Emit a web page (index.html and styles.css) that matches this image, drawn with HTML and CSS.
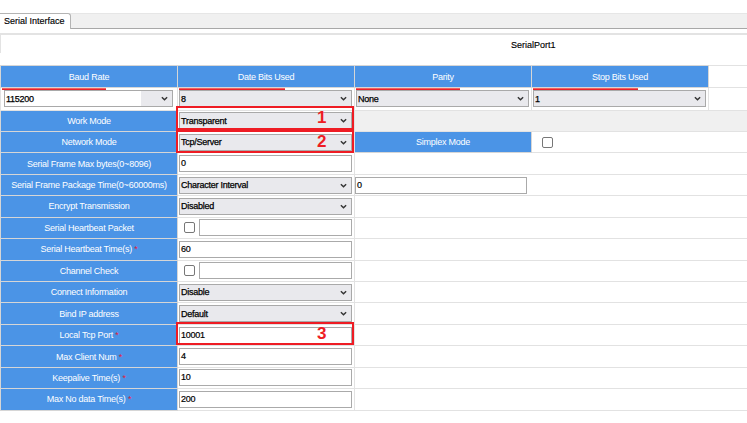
FILE: index.html
```html
<!DOCTYPE html>
<html>
<head>
<meta charset="utf-8">
<link rel="stylesheet" href="styles.css">
</head>
<body>
<div class="page">
  <div class="tabbar">
    <div class="tab">Serial Interface</div>
    <div class="tabrest"></div>
  </div>
  <div class="portbar"><span class="portname">SerialPort1</span></div>

  <table class="grid">
    <colgroup>
      <col class="c1"><col class="c2"><col class="c3"><col class="c4"><col class="c5">
    </colgroup>
    <tr class="head">
      <th>Baud Rate</th>
      <th>Date Bits Used</th>
      <th>Parity</th>
      <th>Stop Bits Used</th>
      <td class="blank"></td>
    </tr>
    <tr class="selrow">
      <td><div class="wrap"><div class="sel combo"><span class="txt">115200</span><span class="drop"><svg class="chev" viewBox="0 0 8 5"><path d="M1 1 L4 4 L7 1"/></svg></span></div><span class="uline" style="width:104px"></span></div></td>
      <td><div class="wrap"><div class="sel"><span class="txt">8</span><svg class="chev" viewBox="0 0 8 5"><path d="M1 1 L4 4 L7 1"/></svg></div><span class="uline" style="width:106px"></span></div></td>
      <td><div class="wrap"><div class="sel"><span class="txt">None</span><svg class="chev" viewBox="0 0 8 5"><path d="M1 1 L4 4 L7 1"/></svg></div><span class="uline" style="width:104px"></span></div></td>
      <td><div class="wrap"><div class="sel"><span class="txt">1</span><svg class="chev" viewBox="0 0 8 5"><path d="M1 1 L4 4 L7 1"/></svg></div><span class="uline" style="width:105px"></span></div></td>
      <td class="blank"></td>
    </tr>
    <tr>
      <td class="lbl">Work Mode</td>
      <td><div class="sel"><span class="txt">Transparent</span><svg class="chev" viewBox="0 0 8 5"><path d="M1 1 L4 4 L7 1"/></svg></div></td>
      <td colspan="3" class="grey"></td>
    </tr>
    <tr>
      <td class="lbl">Network Mode</td>
      <td><div class="sel"><span class="txt">Tcp/Server</span><svg class="chev" viewBox="0 0 8 5"><path d="M1 1 L4 4 L7 1"/></svg></div></td>
      <td class="lbl">Simplex Mode</td>
      <td colspan="2"><span class="cb cb-pad"></span></td>
    </tr>
    <tr>
      <td class="lbl">Serial Frame Max bytes(0~8096)</td>
      <td><div class="inp">0</div></td>
      <td colspan="3"></td>
    </tr>
    <tr>
      <td class="lbl">Serial Frame Package Time(0~60000ms)</td>
      <td><div class="sel"><span class="txt">Character Interval</span><svg class="chev" viewBox="0 0 8 5"><path d="M1 1 L4 4 L7 1"/></svg></div></td>
      <td colspan="3"><div class="inp inp-wide">0</div></td>
    </tr>
    <tr>
      <td class="lbl">Encrypt Transmission</td>
      <td><div class="sel"><span class="txt">Disabled</span><svg class="chev" viewBox="0 0 8 5"><path d="M1 1 L4 4 L7 1"/></svg></div></td>
      <td colspan="3"></td>
    </tr>
    <tr>
      <td class="lbl">Serial Heartbeat Packet</td>
      <td><div class="cbrow"><span class="cb"></span><div class="inp grow"></div></div></td>
      <td colspan="3"></td>
    </tr>
    <tr>
      <td class="lbl">Serial Heartbeat Time(s) <span class="req">*</span></td>
      <td><div class="inp">60</div></td>
      <td colspan="3"></td>
    </tr>
    <tr>
      <td class="lbl">Channel Check</td>
      <td><div class="cbrow"><span class="cb"></span><div class="inp grow"></div></div></td>
      <td colspan="3"></td>
    </tr>
    <tr>
      <td class="lbl">Connect Information</td>
      <td><div class="sel"><span class="txt">Disable</span><svg class="chev" viewBox="0 0 8 5"><path d="M1 1 L4 4 L7 1"/></svg></div></td>
      <td colspan="3"></td>
    </tr>
    <tr>
      <td class="lbl">Bind IP address</td>
      <td><div class="sel"><span class="txt">Default</span><svg class="chev" viewBox="0 0 8 5"><path d="M1 1 L4 4 L7 1"/></svg></div></td>
      <td colspan="3"></td>
    </tr>
    <tr>
      <td class="lbl">Local Tcp Port <span class="req">*</span></td>
      <td><div class="inp">10001</div></td>
      <td colspan="3"></td>
    </tr>
    <tr>
      <td class="lbl">Max Client Num <span class="req">*</span></td>
      <td><div class="inp">4</div></td>
      <td colspan="3"></td>
    </tr>
    <tr>
      <td class="lbl">Keepalive Time(s) <span class="req">*</span></td>
      <td><div class="inp">10</div></td>
      <td colspan="3"></td>
    </tr>
    <tr>
      <td class="lbl">Max No data Time(s) <span class="req">*</span></td>
      <td><div class="inp">200</div></td>
      <td colspan="3"></td>
    </tr>
  </table>

  <div class="mark m1"><span class="num">1</span></div>
  <div class="mark m2"><span class="num">2</span></div>
  <div class="mark m3"><span class="num">3</span></div>
</div>
</body>
</html>
```

FILE: styles.css
```css
html, body {
  margin: 0;
  padding: 0;
  background: #ffffff;
}
body {
  font-family: "Liberation Sans", Arial, sans-serif;
  font-size: 9px;
  color: #111;
}
.page {
  position: relative;
  width: 747px;
  height: 423px;
  overflow: hidden;
}
.tabbar {
  margin-top: 13px;
  height: 16px;
  display: flex;
  background: #f0f0f0;
}
.tab {
  width: 71px;
  box-sizing: border-box;
  background: #ffffff;
  border-top: 1px solid #b4b4b4;
  border-right: 1px solid #b4b4b4;
  border-radius: 0 3px 0 0;
  padding-left: 4px;
  line-height: 15px;
  color: #000;
  -webkit-text-stroke: 0.15px #000;
}
.tabrest {
  flex: 1;
  border-bottom: 1px solid #a8a8a8;
  border-top: 1px solid #e6e6e6;
}
.portbar {
  margin-top: 4px;
  height: 18px;
  border-top: 2px solid #e3e3e3;
  border-left: 1px solid #e3e3e3;
  line-height: 20px;
  padding-left: 510px;
}
.portname {
  color: #000;
  -webkit-text-stroke: 0.15px #000;
}
.grid {
  margin-top: 12px;
  width: 747px;
  border-collapse: collapse;
  table-layout: fixed;
  letter-spacing: -0.25px;
}
.c1, .c2, .c3, .c4 { width: 177px; }
.c5 { width: 39px; }
.grid th, .grid td {
  border: 1px solid #e2e2e2;
  padding: 0;
  height: 20.45px;
  vertical-align: middle;
}
.grid th {
  background: #4b94e6;
  color: #ffffff;
  font-weight: normal;
  text-align: center;
  border-color: #d6d6d6;
}
.grid tr.head th, .grid tr.head td { height: 21px; }
.grid tr.selrow td { height: 21.5px; }
.grid td.lbl {
  background: #4b94e6;
  color: #ffffff;
  text-align: center;
  border-color: #d6d6d6;
}
.grid td.grey { background: #f0f0f0; }
.req { color: #e0203a; }

.wrap { position: relative; }
.uline {
  position: absolute;
  left: 1px;
  top: -2px;
  height: 1px;
  background: #e8222a;
  border-top: 1px solid #f06060;
}
.sel {
  margin: 0 2px 0 1px;
  height: 17px;
  box-sizing: border-box;
  border: 1px solid #a9a9a9;
  background: #e9e9ed;
  display: flex;
  align-items: center;
  justify-content: space-between;
  padding: 0 4px 0 1px;
  overflow: hidden;
}
.sel .txt { color: #000; -webkit-text-stroke: 0.25px #000; }
.chev {
  width: 7px;
  height: 5px;
  flex: none;
}
.chev path {
  fill: none;
  stroke: #333;
  stroke-width: 1.6;
}
.sel.combo {
  background: #ffffff;
  padding-right: 0;
  margin-left: 3px;
  margin-right: 4px;
}
.sel.combo .drop {
  align-self: stretch;
  width: 31px;
  background: #e9e9ed;
  display: flex;
  align-items: center;
  justify-content: flex-end;
  padding-right: 4px;
  box-sizing: border-box;
}
.inp {
  margin: 0 2px 0 1px;
  height: 17px;
  box-sizing: border-box;
  border: 1px solid #aaaaaa;
  background: #ffffff;
  padding-left: 1px;
  line-height: 15px;
  color: #000;
  -webkit-text-stroke: 0.2px #000;
}
.inp-wide {
  width: 172px;
  margin-left: 0;
}
.cbrow {
  display: flex;
  align-items: center;
  margin: 0 2px 0 6px;
  gap: 4px;
}
.grow { flex: 1; margin: 0; }
.cb {
  display: inline-block;
  width: 9px;
  height: 9px;
  border: 1px solid #777;
  border-radius: 2px;
  background: #fff;
  vertical-align: middle;
}
.cb-pad { margin-left: 10px; }

.mark {
  position: absolute;
  left: 176px;
  width: 174px;
  border: 2px solid #ee1c24;
}
.m1 { top: 106px; height: 20px; }
.m2 { top: 130px; height: 19px; }
.m3 { top: 322px; height: 19px; }
.num {
  position: absolute;
  left: 139px;
  top: 1px;
  font-family: "Liberation Sans", Arial, sans-serif;
  font-weight: bold;
  font-size: 17px;
  line-height: 18px;
  color: #ee1c24;
}
```
